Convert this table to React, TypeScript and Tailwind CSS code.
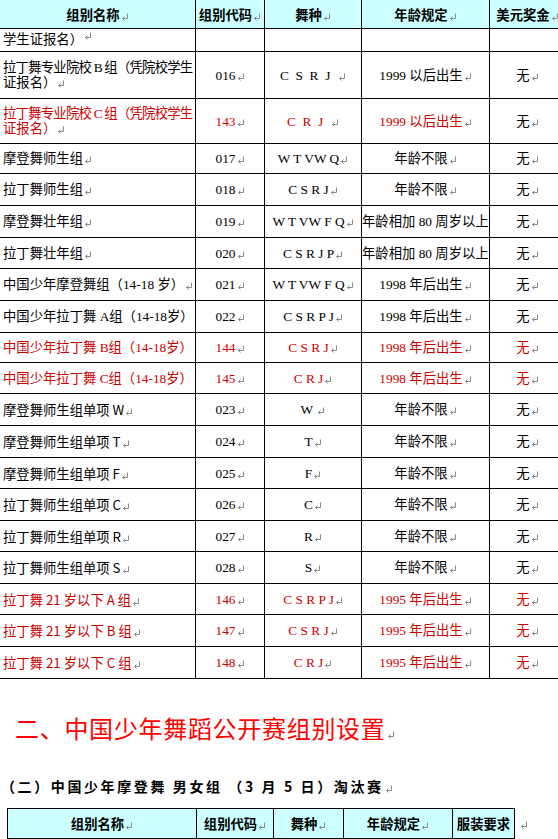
import clsx from "clsx"

const RED = "text-[#cc0000]"

function Mark() {
  return (
    <svg width="8" height="8" viewBox="0 0 8 8" className="inline-block ml-[1px] align-[-1px]">
      <path d="M6.5 0.5V5.5H1.5" stroke="#8a8a8a" fill="none" />
      <path d="M3.5 3.5L1.5 5.5L3.5 7.5" stroke="#8a8a8a" fill="none" />
    </svg>
  )
}

interface Row {
  name: string[]
  code: string
  dance: string
  age: string
  red?: boolean
  redPrize?: boolean
  cjkName?: boolean
  tight?: boolean
}

const rows: Row[] = [
  { name: ["拉丁舞专业院校 B 组（凭院校学生", "证报名）"], code: "016", dance: "C\u00a0\u00a0S\u00a0\u00a0R\u00a0\u00a0J\u00a0\u00a0", age: "1999 以后出生", tight: true },
  { name: ["拉丁舞专业院校 C 组（凭院校学生", "证报名）"], code: "143", dance: "C\u00a0\u00a0R\u00a0\u00a0J\u00a0\u00a0", age: "1999 以后出生", red: true, tight: true },
  { name: ["摩登舞师生组"], code: "017", dance: "W T VW Q", age: "年龄不限" },
  { name: ["拉丁舞师生组"], code: "018", dance: "C S R J", age: "年龄不限" },
  { name: ["摩登舞壮年组"], code: "019", dance: "W T VW F Q", age: "年龄相加 80 周岁以上" },
  { name: ["拉丁舞壮年组"], code: "020", dance: "C S R J P", age: "年龄相加 80 周岁以上" },
  { name: ["中国少年摩登舞组（14-18 岁）"], code: "021", dance: "W T VW F Q", age: "1998 年后出生" },
  { name: ["中国少年拉丁舞 A组（14-18岁）"], code: "022", dance: "C S R P J", age: "1998 年后出生" },
  { name: ["中国少年拉丁舞 B组（14-18岁）"], code: "144", dance: "C S R J", age: "1998 年后出生", red: true, redPrize: true },
  { name: ["中国少年拉丁舞 C组（14-18岁）"], code: "145", dance: "C R J", age: "1998 年后出生", red: true, redPrize: true },
  { name: ["摩登舞师生组单项 W"], code: "023", dance: "W\u00a0", age: "年龄不限", cjkName: true },
  { name: ["摩登舞师生组单项 T"], code: "024", dance: "T", age: "年龄不限", cjkName: true },
  { name: ["摩登舞师生组单项 F"], code: "025", dance: "F", age: "年龄不限", cjkName: true },
  { name: ["拉丁舞师生组单项 C"], code: "026", dance: "C", age: "年龄不限", cjkName: true },
  { name: ["拉丁舞师生组单项 R"], code: "027", dance: "R", age: "年龄不限", cjkName: true },
  { name: ["拉丁舞师生组单项 S"], code: "028", dance: "S", age: "年龄不限", cjkName: true },
  { name: ["拉丁舞 21 岁以下 A 组"], code: "146", dance: "C S R P J", age: "1995 年后出生", red: true, redPrize: true, cjkName: true },
  { name: ["拉丁舞 21 岁以下 B 组"], code: "147", dance: "C S R J", age: "1995 年后出生", red: true, redPrize: true, cjkName: true },
  { name: ["拉丁舞 21 岁以下 C 组"], code: "148", dance: "C R J", age: "1995 年后出生", red: true, redPrize: true, cjkName: true },
]

const cell = "border-r border-b border-black flex items-center overflow-hidden whitespace-pre"

function Center({ children, className }: { children: React.ReactNode; className?: string }) {
  return (
    <div className={clsx(cell, className)}>
      <div className="w-full text-center">{children}</div>
    </div>
  )
}

export default function App() {
  return (
    <div className="w-[558px] h-[839px] overflow-hidden bg-white text-black text-[13.33px] leading-[15px] font-['Liberation_Serif','Noto_Sans_CJK_SC',serif]">
      {/* top table, scrolled so its top and left edges are out of view */}
      <div className="grid w-[566px] grid-cols-[196px_69px_97px_128px_76px] grid-rows-[29px_23px_47px_45px_30px_32px_32px_31px_32px_32px_30px_31px_32px_32px_31px_32px_31px_32px_31px_32px_32px]">
        {["组别名称", "组别代码", "舞种", "年龄规定", "美元奖金"].map((h) => (
          <Center key={h} className="bg-[#ccffff] font-bold font-['Noto_Sans_CJK_SC',sans-serif]">
            {h}
            <Mark />
          </Center>
        ))}

        <div className={clsx(cell, "items-start pt-[3px] pl-[3px]")}>
          学生证报名）
          <Mark />
        </div>
        <div className={cell} />
        <div className={cell} />
        <div className={cell} />
        <div className={cell} />

        {rows.map((r) => (
          <div key={r.code} className="contents">
            <div
              className={clsx(
                cell,
                "pl-[3px]",
                r.red && RED,
                r.cjkName && "font-['Noto_Sans_CJK_SC',sans-serif]"
              )}
            >
              <div>
                {r.name.map((line, i) => (
                  <div key={i} className={clsx(r.tight && i === 0 && "tracking-[-0.75px]")}>
                    {line}
                    {i === r.name.length - 1 && <Mark />}
                  </div>
                ))}
              </div>
            </div>
            <Center className={clsx(r.red && RED)}>
              {r.code}
              <Mark />
            </Center>
            <Center className={clsx(r.red && RED)}>
              {r.dance}
              <Mark />
            </Center>
            <Center className={clsx(r.red && RED)}>
              {r.age}
              <Mark />
            </Center>
            <Center className={clsx(r.redPrize && RED)}>
              无
              <Mark />
            </Center>
          </div>
        ))}
      </div>

      <div className="mt-[33px] pl-[15px] h-[32px] leading-[32px] text-[24px] tracking-[0.7px] text-[#ff0000] font-['Noto_Sans_CJK_SC',sans-serif]">
        二、中国少年舞蹈公开赛组别设置
        <Mark />
      </div>

      <div className="mt-[32px] pl-[1px] h-[20px] leading-[20px] text-[14px] tracking-[2.6px] font-bold whitespace-pre font-['Noto_Sans_CJK_SC',sans-serif]">
        （二）中国少年摩登舞 男女组 （3 月 5 日）淘汰赛
        <Mark />
      </div>

      <div className="mt-[12px] ml-[7px] flex items-center">
        <div className="grid grid-cols-[189px_77px_70px_109px_62px] border-t border-l border-black bg-[#ccffff] font-bold font-['Noto_Sans_CJK_SC',sans-serif]">
          {["组别名称", "组别代码", "舞种", "年龄规定"].map((h) => (
            <Center key={h} className="h-[30px]">
              {h}
              <Mark />
            </Center>
          ))}
          <Center className="h-[30px]">服装要求</Center>
        </div>
        <div className="ml-[4px]">
          <Mark />
        </div>
      </div>
    </div>
  )
}
